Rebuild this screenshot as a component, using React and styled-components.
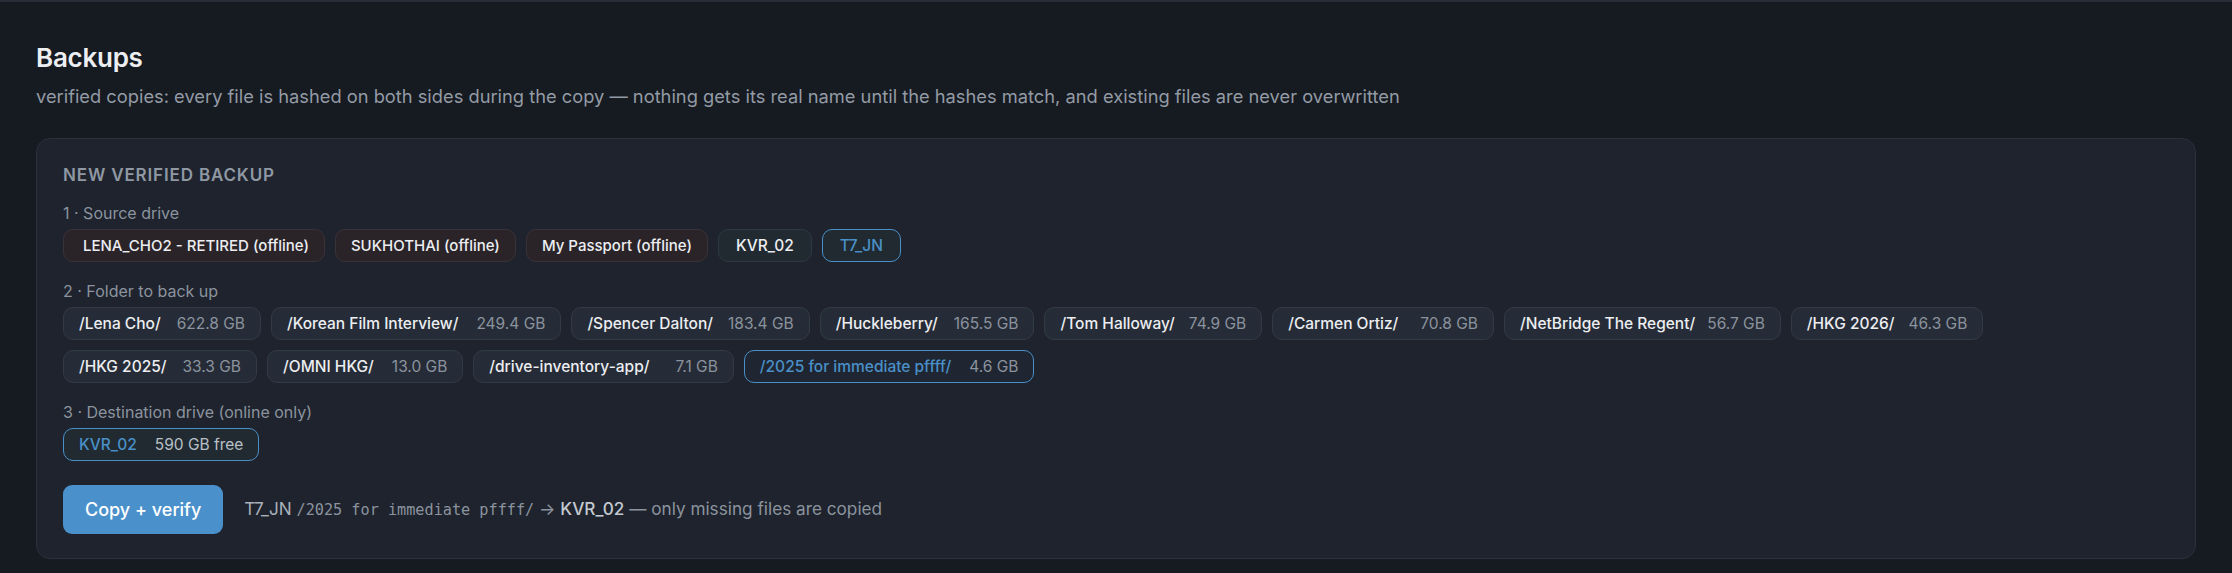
import React from "react";
import styled, { createGlobalStyle, css } from "styled-components";

const Global = createGlobalStyle`
  html, body { margin: 0; padding: 0; background: #161a21; }
  body { font-family: Inter, "Noto Sans", Roboto, sans-serif; color: #e6e8eb; }
  * { box-sizing: border-box; }
`;

const Page = styled.div`
  min-height: 573px;
  border-top: 2px solid #272d37;
  padding: 40px 36px 14px 36px;
`;

const Title = styled.h1`
  margin: 0;
  font-size: 26px;
  line-height: 31px;
  font-weight: 600;
  color: #eceef1;
  letter-spacing: -0.01em;
`;

const Subtitle = styled.p`
  margin: 11px 0 0 0;
  font-size: 18.3px;
  line-height: 24px;
  color: #939ba5;
`;

const Card = styled.section`
  margin-top: 30px;
  background: #1e232d;
  border: 1px solid #2b323d;
  border-radius: 14px;
  padding: 26px 26px 24px 26px;
  display: flex;
  flex-direction: column;
`;

const CardTitle = styled.h2`
  margin: 0 0 17.5px 0;
  font-size: 17px;
  line-height: 20px;
  font-weight: 600;
  letter-spacing: 0.05em;
  text-transform: uppercase;
  color: #8f98a3;
`;

const Section = styled.div`
  display: flex;
  flex-direction: column;
  & + & { margin-top: 18.5px; }
`;

const Label = styled.div`
  font-size: 16px;
  line-height: 20px;
  color: #8b939e;
  margin-bottom: 6.5px;
`;

const ChipRow = styled.div`
  display: flex;
  flex-wrap: wrap;
  gap: 10px;
`;

const tones = {
  offline: css`
    background: #2a2429;
    border-color: #3a3239;
    font-size: 15px;
  `,
  online: css`
    background: #202a30;
    border-color: #2e3842;
    font-size: 15.5px;
  `,
  folder: css`
    background: #262c37;
    border-color: #323a46;
    font-size: 15.5px;
  `,
};

const Chip = styled.button`
  display: inline-flex;
  align-items: center;
  gap: ${(p) => (p.$gap ? p.$gap : 0)}px;
  height: 33px;
  margin: 0;
  padding: 0 ${(p) => (p.$wide ? 17 : 15)}px;
  border: 1px solid;
  border-radius: 10px;
  font-family: inherit;
  line-height: 19px;
  font-weight: 500;
  color: #eceef1;
  white-space: pre;
  cursor: pointer;
  ${(p) => tones[p.$tone]}
  ${(p) =>
    p.$selected &&
    css`
      border-color: #4a90c8;
      color: #4a90c8;
      ${p.$tone === "folder" && "background: #1f2631;"}
    `}
`;

const Size = styled.span`
  font-weight: 400;
  color: ${(p) => (p.$light ? "#b9c0c8" : "#8b939e")};
`;

const Footer = styled.div`
  display: flex;
  align-items: center;
  gap: 21px;
  margin-top: 24px;
`;

const PrimaryButton = styled.button`
  height: 49px;
  margin: 0;
  padding: 0 22px;
  border: none;
  border-radius: 9px;
  background: #4a91cb;
  color: #ffffff;
  font-family: inherit;
  font-size: 18px;
  font-weight: 500;
  cursor: pointer;
`;

const Summary = styled.div`
  font-size: 17.2px;
  line-height: 20px;
  color: #8b939e;
  white-space: pre;
`;

const Strong = styled.span`
  color: ${(p) => p.$color || "#aeb5bd"};
  font-weight: ${(p) => p.$weight || 400};
`;

const Mono = styled.span`
  font-family: "DejaVu Sans Mono", "Liberation Mono", monospace;
  font-size: 15.2px;
  color: #8b939e;
`;

const sources = [
  { name: "\u00a0LENA_CHO2 - RETIRED (offline)", tone: "offline" },
  { name: "SUKHOTHAI (offline)", tone: "offline" },
  { name: "My Passport (offline)", tone: "offline" },
  { name: "KVR_02", tone: "online", wide: true },
  { name: "T7_JN", tone: "online", wide: true, selected: true },
];

const folders = [
  ["/Lena Cho/", "622.8 GB", 16],
  ["/Korean Film Interview/", "249.4 GB", 18],
  ["/Spencer Dalton/", "183.4 GB", 15],
  ["/Huckleberry/", "165.5 GB", 16],
  ["/Tom Halloway/", "74.9 GB", 14],
  ["/Carmen Ortiz/", "70.8 GB", 22],
  ["/NetBridge The Regent/", "56.7 GB", 12],
  ["/HKG 2026/", "46.3 GB", 14],
  ["/HKG 2025/", "33.3 GB", 16],
  ["/OMNI HKG/", "13.0 GB", 18],
  ["/drive-inventory-app/", "7.1 GB", 26],
  ["/2025 for immediate pffff/", "4.6 GB", 18, true],
];

export default function App() {
  return (
    <>
      <Global />
      <Page>
        <Title>Backups</Title>
        <Subtitle>
          verified copies: every file is hashed on both sides during the copy — nothing gets its real name until the
          hashes match, and existing files are never overwritten
        </Subtitle>
        <Card>
          <CardTitle>New verified backup</CardTitle>
          <Section>
            <Label>1 · Source drive</Label>
            <ChipRow>
              {sources.map((s) => (
                <Chip key={s.name} $tone={s.tone} $wide={s.wide} $selected={s.selected}>
                  {s.name}
                </Chip>
              ))}
            </ChipRow>
          </Section>
          <Section>
            <Label>2 · Folder to back up</Label>
            <ChipRow>
              {folders.map(([name, size, gap, sel]) => (
                <Chip key={name} $tone="folder" $gap={gap} $selected={sel}>
                  {name}
                  <Size>{size}</Size>
                </Chip>
              ))}
            </ChipRow>
          </Section>
          <Section>
            <Label>3 · Destination drive (online only)</Label>
            <ChipRow>
              <Chip $tone="online" $gap={18} $selected>
                KVR_02
                <Size $light>590 GB free</Size>
              </Chip>
            </ChipRow>
          </Section>
          <Footer>
            <PrimaryButton>Copy + verify</PrimaryButton>
            <Summary>
              <Strong $color="#a9b1ba">T7_JN</Strong> <Mono>/2025 for immediate pffff/</Mono> →{" "}
              <Strong $color="#c3c9d0" $weight={500}>KVR_02</Strong> — only missing files are copied
            </Summary>
          </Footer>
        </Card>
      </Page>
    </>
  );
}
